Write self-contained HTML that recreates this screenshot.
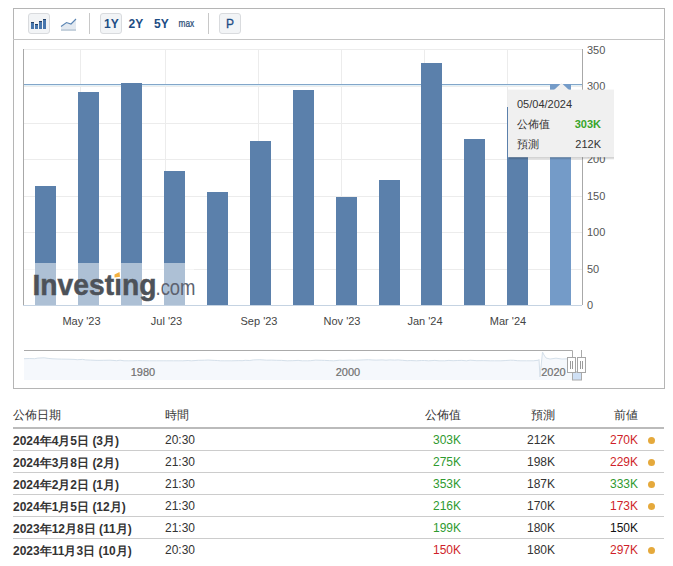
<!DOCTYPE html>
<html><head><meta charset="utf-8">
<style>
html,body{margin:0;padding:0;background:#fff;width:673px;height:566px;overflow:hidden;}
body{font-family:"Liberation Sans",sans-serif;position:relative;}
svg{position:absolute;left:0;top:0;}
.tb{position:absolute;top:13px;height:21px;box-sizing:border-box;}
.btn{border:1px solid #d9dbde;border-radius:3px;background:#f2f4f6;}
.lbl{position:absolute;font-weight:bold;font-size:11px;color:#1d4d84;line-height:21px;top:13px;}
table{position:absolute;left:13px;top:398px;width:651px;border-collapse:collapse;font-size:12px;color:#333;}
td,th{height:21px;padding:0;white-space:nowrap;}
th{font-weight:normal;text-align:left;height:30px;border-bottom:2px solid #bbb;vertical-align:middle;padding-top:6px;box-sizing:border-box;}
td{border-bottom:1px solid #ccc;}
tr:last-child td{border-bottom:none;}
.r{text-align:right;}
.g{color:#2f9a2f;}
.rd{color:#cf1f2a;}
.dot{display:inline-block;width:7px;height:7px;border-radius:50%;background:#e5a93c;}
</style></head><body>
<svg width="673" height="395" viewBox="0 0 673 395" font-family="Liberation Sans, sans-serif">
  <!-- outer border -->
  <rect x="13.5" y="8.5" width="651" height="380" fill="#fff" stroke="#b5b5b5"/>
  <line x1="13" y1="39.5" x2="665" y2="39.5" stroke="#c4c4c4"/>
  <!-- grid -->
  <g stroke="#ececec" stroke-width="1">
    <line x1="23" y1="49.5" x2="582" y2="49.5"/>
    <line x1="23" y1="86.5" x2="582" y2="86.5"/>
    <line x1="23" y1="123.5" x2="582" y2="123.5"/>
    <line x1="23" y1="159.5" x2="582" y2="159.5"/>
    <line x1="23" y1="196.5" x2="582" y2="196.5"/>
    <line x1="23" y1="232.5" x2="582" y2="232.5"/>
    <line x1="23" y1="269.5" x2="582" y2="269.5"/>
    <line x1="80.5" y1="49" x2="80.5" y2="305"/>
    <line x1="165.5" y1="49" x2="165.5" y2="305"/>
    <line x1="258.5" y1="49" x2="258.5" y2="305"/>
    <line x1="341.5" y1="49" x2="341.5" y2="305"/>
    <line x1="424.5" y1="49" x2="424.5" y2="305"/>
    <line x1="507.5" y1="49" x2="507.5" y2="305"/>
  </g>
  <line x1="23" y1="84.5" x2="582" y2="84.5" stroke="#82a6c9"/>
  <line x1="23" y1="85.5" x2="582" y2="85.5" stroke="#e2f1f8"/>
  <line x1="23.5" y1="49" x2="23.5" y2="306" stroke="#a8a8a8"/>
  <line x1="582.5" y1="49" x2="582.5" y2="305" stroke="#a8a8a8"/>
  <line x1="23" y1="305.5" x2="582" y2="305.5" stroke="#c5d3e2"/>
  <!-- bars -->
  <g fill="#5b80ab">
    <rect x="35" y="186" width="21" height="119"/>
    <rect x="78" y="92" width="21" height="213"/>
    <rect x="121" y="83" width="21" height="222"/>
    <rect x="164" y="171" width="21" height="134"/>
    <rect x="207" y="192" width="21" height="113"/>
    <rect x="250" y="141" width="21" height="164"/>
    <rect x="293" y="90" width="21" height="215"/>
    <rect x="336" y="197" width="21" height="108"/>
    <rect x="379" y="180" width="21" height="125"/>
    <rect x="421" y="63" width="21" height="242"/>
    <rect x="464" y="139" width="21" height="166"/>
    <rect x="507" y="107" width="21" height="198"/>
  </g>
  <rect x="550" y="84" width="21" height="221" fill="#749bc8"/>
  <!-- watermark overlay -->
  <rect x="24" y="263" width="170" height="42" fill="#fff" fill-opacity="0.5"/>
  <text x="32.5" y="294.5" font-size="30" font-weight="bold" fill="#4d5259" stroke="#4d5259" stroke-width="0.5" textLength="124" lengthAdjust="spacingAndGlyphs">Investıng</text>
  <text x="155.5" y="294.5" font-size="21.5" fill="#5d6370" textLength="40" lengthAdjust="spacingAndGlyphs">.com</text>
  <path d="M114.5 274.5 L119.5 272 L120 276.8 L114.5 277.5 Z" fill="#f3b140"/>
  <!-- y labels -->
  <g font-size="11" fill="#555">
    <text x="587" y="54">350</text>
    <text x="587" y="90">300</text>
    <text x="587" y="127">250</text>
    <text x="587" y="163">200</text>
    <text x="587" y="200">150</text>
    <text x="587" y="236">100</text>
    <text x="587" y="273">50</text>
    <text x="587" y="309">0</text>
  </g>
  <!-- x labels -->
  <g font-size="11" fill="#444" text-anchor="middle">
    <text x="81.5" y="325">May '23</text>
    <text x="166.5" y="325">Jul '23</text>
    <text x="259" y="325">Sep '23</text>
    <text x="342" y="325">Nov '23</text>
    <text x="425" y="325">Jan '24</text>
    <text x="508" y="325">Mar '24</text>
  </g>
  <!-- navigator -->
  <path d="M24.0 358.7 L29.2 358.5 L34.6 358.7 L37.9 358.1 L44.2 357.8 L48.1 358.4 L53.0 358.8 L57.9 359.0 L61.5 359.1 L68.0 359.2 L74.0 359.4 L77.2 359.7 L82.6 359.4 L85.7 359.9 L90.6 360.1 L97.1 360.4 L103.8 360.3 L110.0 360.2 L116.7 360.7 L120.1 360.2 L124.0 360.8 L128.8 360.8 L133.0 360.8 L137.5 360.6 L142.8 360.7 L149.5 360.8 L156.2 360.8 L163.1 360.8 L166.8 360.8 L173.6 360.8 L178.9 360.8 L182.8 360.8 L188.1 360.5 L191.3 360.8 L198.3 360.3 L204.5 360.2 L208.1 360.0 L214.2 360.4 L217.3 360.5 L220.5 360.8 L224.8 360.8 L231.8 360.8 L238.8 360.6 L242.1 360.7 L245.2 360.3 L249.8 360.5 L253.4 359.9 L259.9 359.7 L266.7 360.2 L271.3 360.1 L276.3 360.3 L281.7 360.4 L287.2 360.8 L292.2 360.7 L298.1 360.4 L302.3 360.8 L307.4 360.8 L310.4 360.7 L315.8 360.1 L321.2 360.3 L324.5 360.4 L329.3 360.6 L333.7 360.8 L339.7 360.2 L342.9 360.4 L349.8 360.1 L354.6 360.3 L358.9 360.1 L363.1 359.9 L368.5 359.7 L373.0 360.0 L376.1 360.1 L382.1 359.9 L386.0 360.2 L389.9 359.9 L394.7 360.1 L398.1 359.9 L402.4 360.3 L407.2 360.7 L410.8 360.5 L416.4 360.8 L421.3 360.5 L424.7 360.5 L428.5 360.8 L434.9 360.4 L439.0 360.8 L444.5 360.8 L448.9 360.4 L453.1 360.7 L457.2 360.5 L461.8 360.4 L466.5 360.8 L470.1 360.2 L476.9 360.7 L483.8 360.6 L490.6 360.8 L494.5 360.8 L500.9 360.8 L505.9 360.5 L510.3 360.2 L513.6 360.3 L517.7 360.7 L520.9 360.8 L526.7 360.8 L533.3 360.8 L538.6 360.2 L539.0 359.5 L540 377 L542.5 352 L544 355 L546 358 L550 359 L556 358.2 L562 359 L572 358.6 V380 H24 Z" fill="#f5f8fc"/>
  <path d="M24.0 358.7 L29.2 358.5 L34.6 358.7 L37.9 358.1 L44.2 357.8 L48.1 358.4 L53.0 358.8 L57.9 359.0 L61.5 359.1 L68.0 359.2 L74.0 359.4 L77.2 359.7 L82.6 359.4 L85.7 359.9 L90.6 360.1 L97.1 360.4 L103.8 360.3 L110.0 360.2 L116.7 360.7 L120.1 360.2 L124.0 360.8 L128.8 360.8 L133.0 360.8 L137.5 360.6 L142.8 360.7 L149.5 360.8 L156.2 360.8 L163.1 360.8 L166.8 360.8 L173.6 360.8 L178.9 360.8 L182.8 360.8 L188.1 360.5 L191.3 360.8 L198.3 360.3 L204.5 360.2 L208.1 360.0 L214.2 360.4 L217.3 360.5 L220.5 360.8 L224.8 360.8 L231.8 360.8 L238.8 360.6 L242.1 360.7 L245.2 360.3 L249.8 360.5 L253.4 359.9 L259.9 359.7 L266.7 360.2 L271.3 360.1 L276.3 360.3 L281.7 360.4 L287.2 360.8 L292.2 360.7 L298.1 360.4 L302.3 360.8 L307.4 360.8 L310.4 360.7 L315.8 360.1 L321.2 360.3 L324.5 360.4 L329.3 360.6 L333.7 360.8 L339.7 360.2 L342.9 360.4 L349.8 360.1 L354.6 360.3 L358.9 360.1 L363.1 359.9 L368.5 359.7 L373.0 360.0 L376.1 360.1 L382.1 359.9 L386.0 360.2 L389.9 359.9 L394.7 360.1 L398.1 359.9 L402.4 360.3 L407.2 360.7 L410.8 360.5 L416.4 360.8 L421.3 360.5 L424.7 360.5 L428.5 360.8 L434.9 360.4 L439.0 360.8 L444.5 360.8 L448.9 360.4 L453.1 360.7 L457.2 360.5 L461.8 360.4 L466.5 360.8 L470.1 360.2 L476.9 360.7 L483.8 360.6 L490.6 360.8 L494.5 360.8 L500.9 360.8 L505.9 360.5 L510.3 360.2 L513.6 360.3 L517.7 360.7 L520.9 360.8 L526.7 360.8 L533.3 360.8 L538.6 360.2 L539.0 359.5 L540 377 L542.5 352 L544 355 L546 358 L550 359 L556 358.2 L562 359 L572 358.6" fill="none" stroke="#d5e0ea" stroke-width="1"/>
  <path d="M24 350.5 H572.5 V372" fill="none" stroke="#aaa"/>
  <path d="M581.5 350 V380" fill="none" stroke="#aaa"/>
  <rect x="572.5" y="372" width="9" height="8" fill="#cfe0f5" stroke="#aaa"/>
  <g font-size="11" fill="#707070" stroke="#707070" stroke-width="0.2" text-anchor="middle">
    <text x="143" y="376">1980</text>
    <text x="348" y="376">2000</text>
    <text x="553.5" y="376">2020</text>
  </g>
  <g fill="#fff" stroke="#a6a6a6">
    <rect x="567.5" y="357.5" width="8" height="15"/>
    <rect x="577.5" y="357.5" width="8" height="15"/>
  </g>
  <g stroke="#9a9a9a">
    <line x1="570.5" y1="361" x2="570.5" y2="369"/>
    <line x1="572.5" y1="361" x2="572.5" y2="369"/>
    <line x1="580.5" y1="361" x2="580.5" y2="369"/>
    <line x1="582.5" y1="361" x2="582.5" y2="369"/>
  </g>
  <!-- tooltip -->
  <rect x="509" y="157" width="105" height="1.5" fill="#000" fill-opacity="0.2"/>
  <rect x="509" y="158.5" width="105" height="1" fill="#000" fill-opacity="0.08"/>
  <rect x="508" y="89.6" width="106" height="67.6" fill="#f0f0f0"/>
  <path d="M554 90 L561.5 83 L569 90 Z" fill="#f0f0f0"/>
  <g font-size="11" fill="#333">
    <text x="517" y="108">05/04/2024</text>
    <text x="517" y="128">公佈值</text>
    <text x="601" y="128" text-anchor="end" font-weight="bold" fill="#37a52a">303K</text>
    <text x="517" y="148">預測</text>
    <text x="601" y="148" text-anchor="end">212K</text>
  </g>
</svg>
<!-- toolbar -->
<div class="tb btn" style="left:28px;width:22px;"></div>
<svg style="left:0;top:0" width="673" height="40">
  <g fill="#4776ad">
    <rect x="31" y="22" width="3" height="7"/>
    <rect x="35" y="24" width="3" height="5"/>
    <rect x="39" y="21" width="3" height="8"/>
    <rect x="43" y="19" width="3" height="10"/>
  </g>
  <g fill="#223f66">
    <rect x="31" y="22" width="3" height="1"/>
    <rect x="35" y="24" width="3" height="1"/>
    <rect x="39" y="21" width="3" height="1"/>
    <rect x="43" y="19" width="3" height="1"/>
  </g>
  <path d="M61 30.5 V26.5 L66.5 22.5 L71 24 L76 19 V30.5 Z" fill="#e3e9f0"/>
  <path d="M61 26.5 L66.5 22.5 L71 24 L76 19" fill="none" stroke="#5a84b3" stroke-width="1.1"/>
  <rect x="61" y="29.4" width="15" height="1.3" fill="#b3c2d1"/>
  <rect x="89" y="13" width="1" height="21" fill="#c8c8c8"/>
  <rect x="208" y="13" width="1" height="21" fill="#c8c8c8"/>
</svg>
<div class="tb btn" style="left:100px;width:22px;"></div>
<div class="tb btn" style="left:219px;width:22px;"></div>
<svg style="left:0;top:0" width="673" height="40" font-family="Liberation Sans, sans-serif">
  <g font-size="12" font-weight="bold" fill="#1d4d84">
    <text x="104" y="27.5">1Y</text>
    <text x="128.5" y="27.5">2Y</text>
    <text x="154" y="27.5">5Y</text>
  </g>
  <text x="178.5" y="27" font-size="10" fill="#2a4d78" stroke="#2a4d78" stroke-width="0.25" transform="translate(178.5 0) scale(0.83 1) translate(-178.5 0)">max</text>
  <text x="226" y="27.5" font-size="12" fill="#1d4d84" stroke="#1d4d84" stroke-width="0.3">P</text>
</svg>
<table>
<tr><th style="width:152px">公佈日期</th><th style="width:260px">時間</th><th class="r" style="width:36px">公佈值</th><th class="r" style="width:94px">預測</th><th class="r" style="width:83px">前値</th><th style="width:26px"></th></tr>
<tr><td><b style="position:relative;top:1.5px">2024年4月5日 (3月)</b></td><td>20:30</td><td class="r g">303K</td><td class="r">212K</td><td class="r rd">270K</td><td style="text-align:center"><span class="dot"></span></td></tr>
<tr><td><b style="position:relative;top:1.5px">2024年3月8日 (2月)</b></td><td>21:30</td><td class="r g">275K</td><td class="r">198K</td><td class="r rd">229K</td><td style="text-align:center"><span class="dot"></span></td></tr>
<tr><td><b style="position:relative;top:1.5px">2024年2月2日 (1月)</b></td><td>21:30</td><td class="r g">353K</td><td class="r">187K</td><td class="r g">333K</td><td style="text-align:center"><span class="dot"></span></td></tr>
<tr><td><b style="position:relative;top:1.5px">2024年1月5日 (12月)</b></td><td>21:30</td><td class="r g">216K</td><td class="r">170K</td><td class="r rd">173K</td><td style="text-align:center"><span class="dot"></span></td></tr>
<tr><td><b style="position:relative;top:1.5px">2023年12月8日 (11月)</b></td><td>21:30</td><td class="r g">199K</td><td class="r">180K</td><td class="r" style="color:#111">150K</td><td></td></tr>
<tr><td><b style="position:relative;top:1.5px">2023年11月3日 (10月)</b></td><td>20:30</td><td class="r rd">150K</td><td class="r">180K</td><td class="r rd">297K</td><td style="text-align:center"><span class="dot"></span></td></tr>
</table>
</body></html>
